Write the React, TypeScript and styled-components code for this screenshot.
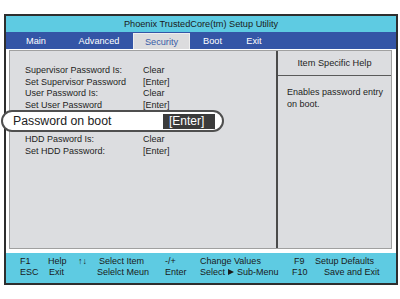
import React from "react";
import styled, { createGlobalStyle } from "styled-components";

const Global = createGlobalStyle`
  html, body { margin: 0; padding: 0; background: #ffffff; }
  body { font-family: "Liberation Sans", Arial, sans-serif; color: #1e1e1e; }
`;

const Frame = styled.div`
  box-sizing: border-box;
  margin: 14px 0 0 4px;
  width: 394px;
  border: 2px solid #2e2e2e;
  background: #ffffff;
`;

const TitleBar = styled.div`
  height: 16px;
  background: #5ecbe2;
  display: flex;
  align-items: center;
  justify-content: center;
  font-size: 9.2px;
  color: #1a1a1a;
`;

const MenuBar = styled.div`
  height: 17px;
  background: #3455a6;
  display: flex;
  padding-left: 1px;
`;

const MenuItem = styled.div<{ $w: number; $active?: boolean }>`
  box-sizing: border-box;
  width: ${(p) => p.$w}px;
  display: flex;
  align-items: center;
  justify-content: center;
  font-size: 9.2px;
  color: ${(p) => (p.$active ? "#3a5ca8" : "#ffffff")};
  background: ${(p) => (p.$active ? "#dcdcde" : "transparent")};
  margin-top: ${(p) => (p.$active ? "1px" : "0")};
  border: ${(p) => (p.$active ? "1px solid #eeeeee" : "none")};
  border-bottom: none;
`;

const Body = styled.div`
  padding: 1px 4px 4px 3px;
  background: #ffffff;
`;

const Panel = styled.div`
  box-sizing: border-box;
  height: 199px;
  border: 1px solid #a0a0a0;
  background: #dcdde0;
  display: grid;
  grid-template-columns: 266px 2px 1fr;
`;

const LeftPane = styled.div`
  padding-top: 14px;
  display: flex;
  flex-direction: column;
`;

const Row = styled.div`
  display: grid;
  grid-template-columns: 118px auto;
  padding-left: 15px;
  height: 11.5px;
  line-height: 11.5px;
  font-size: 9px;
  color: #1e1e1e;
`;

const Pill = styled.div`
  position: relative;
  box-sizing: border-box;
  margin: -1px 0 2px -9px;
  width: 223px;
  height: 22px;
  border: 2px solid #4f4f4f;
  border-radius: 11px;
  background: #ffffff;
  display: flex;
  align-items: center;
  justify-content: space-between;
  padding: 0 7px 0 10px;
`;

const PillLabel = styled.span`
  font-size: 12.3px;
  color: #222222;
`;

const PillValue = styled.span`
  box-sizing: border-box;
  width: 52px;
  height: 15px;
  background: #3b3b3b;
  color: #ffffff;
  font-size: 12px;
  display: flex;
  align-items: center;
  padding-left: 6px;
`;

const Separator = styled.div`
  background: #4a4a4a;
`;

const RightPane = styled.div`
  display: flex;
  flex-direction: column;
`;

const HelpHeader = styled.div`
  height: 24px;
  display: flex;
  align-items: center;
  justify-content: center;
  font-size: 9.2px;
  border-bottom: 1px solid #5a5a5a;
`;

const HelpText = styled.div`
  padding: 11px 4px 0 9px;
  font-size: 9px;
  line-height: 11.5px;
`;

const Gap = styled.div`
  height: 0;
`;

const Footer = styled.div`
  box-sizing: border-box;
  height: 30px;
  background: #5ecbe2;
  padding: 2.5px 0 0 14px;
  display: grid;
  grid-template-columns: 28px 30px 21px 66px 35px 94px 21px 1fr;
  grid-template-rows: 11px 11px;
  font-size: 9px;
  line-height: 11px;
  color: #1a1a1a;
`;

const Cell = styled.span<{ $shift?: number }>`
  white-space: nowrap;
  margin-left: ${(p) => p.$shift ?? 0}px;
`;

const Tri = styled.span`
  display: inline-block;
  width: 0;
  height: 0;
  border-top: 3.5px solid transparent;
  border-bottom: 3.5px solid transparent;
  border-left: 6px solid #1a1a1a;
  margin: 0 3px 0 3px;
  vertical-align: -0.5px;
`;

const rows: [string, string][] = [
  ["Supervisor Password Is:", "Clear"],
  ["Set Supervisor Password", "[Enter]"],
  ["User Password Is:", "Clear"],
  ["Set User Password", "[Enter]"],
];

const hddRows: [string, string][] = [
  ["HDD Pasword Is:", "Clear"],
  ["Set HDD Password:", "[Enter]"],
];

const menu = [
  { label: "Main", w: 58 },
  { label: "Advanced", w: 68 },
  { label: "Security", w: 57, active: true },
  { label: "Boot", w: 45 },
  { label: "Exit", w: 38 },
];

export default function App() {
  return (
    <>
      <Global />
      <Frame>
        <TitleBar>Phoenix TrustedCore(tm) Setup Utility</TitleBar>
        <MenuBar>
          {menu.map((m) => (
            <MenuItem key={m.label} $w={m.w} $active={m.active}>
              {m.label}
            </MenuItem>
          ))}
        </MenuBar>
        <Body>
          <Panel>
            <LeftPane>
              {rows.map(([l, v]) => (
                <Row key={l}>
                  <span>{l}</span>
                  <span>{v}</span>
                </Row>
              ))}
              <Pill>
                <PillLabel>Password on boot</PillLabel>
                <PillValue>[Enter]</PillValue>
              </Pill>
              {hddRows.map(([l, v]) => (
                <Row key={l}>
                  <span>{l}</span>
                  <span>{v}</span>
                </Row>
              ))}
            </LeftPane>
            <Separator />
            <RightPane>
              <HelpHeader>Item Specific Help</HelpHeader>
              <HelpText>
                Enables password entry
                <br />
                on boot.
              </HelpText>
            </RightPane>
          </Panel>
          <Gap />
        </Body>
        <Footer>
          <Cell>F1</Cell>
          <Cell>Help</Cell>
          <Cell>↑↓</Cell>
          <Cell>Select Item</Cell>
          <Cell>-/+</Cell>
          <Cell>Change Values</Cell>
          <Cell>F9</Cell>
          <Cell>Setup Defaults</Cell>
          <Cell>ESC</Cell>
          <Cell $shift={1}>Exit</Cell>
          <Cell />
          <Cell $shift={-2}>Selelct Meun</Cell>
          <Cell>Enter</Cell>
          <Cell>
            Select
            <Tri />
            Sub-Menu
          </Cell>
          <Cell $shift={-2}>F10</Cell>
          <Cell $shift={9}>Save and Exit</Cell>
        </Footer>
      </Frame>
    </>
  );
}
